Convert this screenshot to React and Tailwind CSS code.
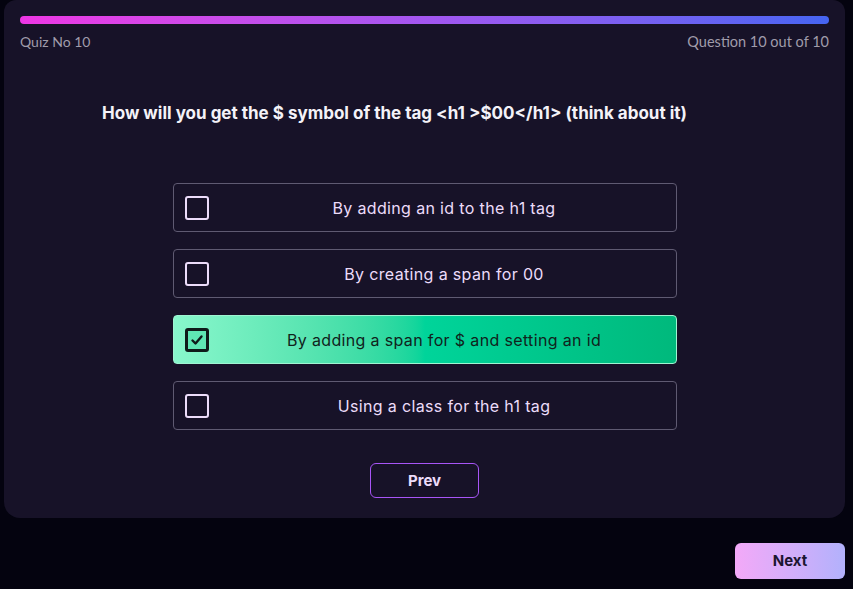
import React, { useState } from 'react';

const options = [
  "By adding an id to the h1 tag",
  "By creating a span for 00",
  "By adding a span for $ and setting an id",
  "Using a class for the h1 tag",
];

const App = () => {
  const [selected, setSelected] = useState(2);

  return (
    <div className="min-h-screen bg-[#04030f] pl-1 pr-2 font-['Inter',sans-serif]">
      {/* Quiz card */}
      <div className="h-[518px] rounded-b-[16px] rounded-t-[12px] bg-[#171228] px-4 pt-4">
        <div className="h-[8px] w-full rounded-full bg-gradient-to-r from-[#ee36e4] via-[#a356f0] to-[#4565f2]"></div>
        <div className="mt-[7px] flex justify-between font-['Lato',sans-serif] text-[14px] text-[#a09cab]">
          <span>Quiz No 10</span>
          <span className="text-[14.5px]">Question 10 out of 10</span>
        </div>

        <h2 className="mt-[48px] pl-[82px] text-[17px] font-bold text-[#f4f2f8]">
          How will you get the $ symbol of the tag &lt;h1 &gt;$00&lt;/h1&gt; (think about it)
        </h2>

        <div className="mx-auto mt-[57px] flex w-[504px] flex-col gap-[17px]">
          {options.map((opt, i) => {
            const active = i === selected;
            return (
              <button
                key={i}
                onClick={() => setSelected(i)}
                className={
                  active
                    ? "flex h-[49px] items-center rounded-[4px] border border-[#9ff5d2] bg-gradient-to-r from-[#88f7cc] via-[#00d49a] to-[#00b97c] pl-[11px] text-left"
                    : "flex h-[49px] items-center rounded-[4px] border border-[#5f5a72] bg-transparent pl-[11px] text-left"
                }
              >
                <span
                  className={
                    active
                      ? "flex h-[24px] w-[24px] shrink-0 items-center justify-center rounded-[3px] border-[3px] border-[#0f1a1a] bg-[#5fe6b4]"
                      : "h-[24px] w-[24px] shrink-0 rounded-[3px] border-2 border-[#ecdcfa]"
                  }
                >
                  {active && (
                    <svg width="14" height="14" viewBox="0 0 14 14" fill="none">
                      <path d="M2.5 7.5 L5.5 10.5 L11.5 3.5" stroke="#0f1a1a" strokeWidth="2.4" strokeLinecap="round" strokeLinejoin="round" />
                    </svg>
                  )}
                </span>
                <span
                  className={
                    active
                      ? "ml-1 flex-1 text-center text-[16px] tracking-[0.35px] text-[#10231c]"
                      : "ml-1 flex-1 text-center text-[16px] tracking-[0.35px] text-[#ecdcfa]"
                  }
                >
                  {opt}
                </span>
              </button>
            );
          })}
        </div>

        <div className="mt-[33px] flex justify-center">
          <button className="h-[35px] w-[109px] rounded-[6px] border border-[#a855f7] text-[15px] font-bold text-[#ecdcfa]">
            Prev
          </button>
        </div>
      </div>

      <div className="mt-[25px] flex justify-end">
        <button className="h-[36px] w-[110px] rounded-[6px] bg-gradient-to-r from-[#f3a9f8] to-[#b2b1fc] text-[15px] font-bold text-[#1c1530]">
          Next
        </button>
      </div>
    </div>
  );
};

export default App;
